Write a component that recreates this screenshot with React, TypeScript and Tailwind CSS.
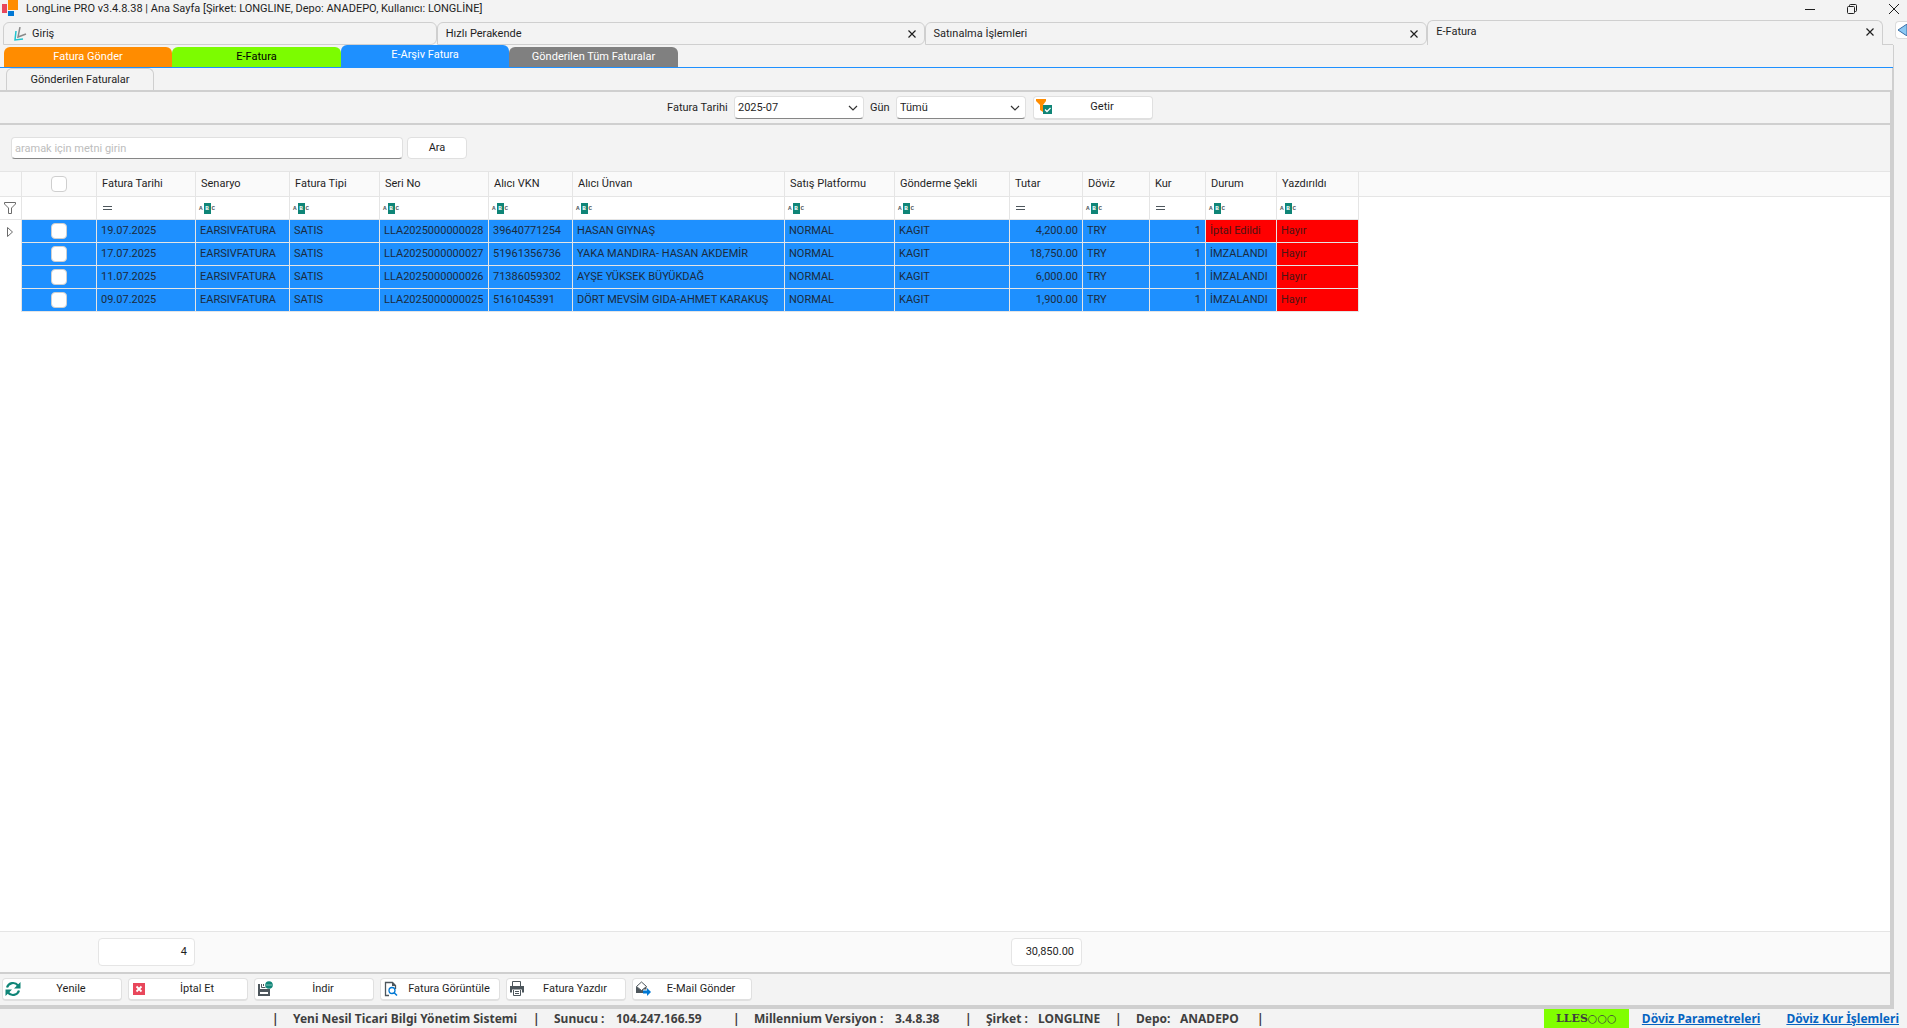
import type { ReactNode } from "react";
import clsx from "clsx";

type Invoice = {
  date: string;
  serial: string;
  taxNo: string;
  title: string;
  amount: string;
  status: string;
  cancelled?: boolean;
};

const invoices: Invoice[] = [
  { date: "19.07.2025", serial: "LLA2025000000028", taxNo: "39640771254", title: "HASAN GIYNAŞ", amount: "4,200.00", status: "İptal Edildi", cancelled: true },
  { date: "17.07.2025", serial: "LLA2025000000027", taxNo: "51961356736", title: "YAKA MANDIRA- HASAN AKDEMİR", amount: "18,750.00", status: "İMZALANDI" },
  { date: "11.07.2025", serial: "LLA2025000000026", taxNo: "71386059302", title: "AYŞE YÜKSEK BÜYÜKDAĞ", amount: "6,000.00", status: "İMZALANDI" },
  { date: "09.07.2025", serial: "LLA2025000000025", taxNo: "5161045391", title: "DÖRT MEVSİM GIDA-AHMET KARAKUŞ", amount: "1,900.00", status: "İMZALANDI" },
];

const columns = [
  { label: "Fatura Tarihi", width: "w-[99px]", filter: "equals" },
  { label: "Senaryo", width: "w-[94px]", filter: "text" },
  { label: "Fatura Tipi", width: "w-[90px]", filter: "text" },
  { label: "Seri No", width: "w-[109px]", filter: "text" },
  { label: "Alıcı VKN", width: "w-[84px]", filter: "text" },
  { label: "Alıcı Ünvan", width: "w-[212px]", filter: "text" },
  { label: "Satış Platformu", width: "w-[110px]", filter: "text" },
  { label: "Gönderme Şekli", width: "w-[115px]", filter: "text" },
  { label: "Tutar", width: "w-[73px]", filter: "equals" },
  { label: "Döviz", width: "w-[67px]", filter: "text" },
  { label: "Kur", width: "w-[56px]", filter: "equals" },
  { label: "Durum", width: "w-[71px]", filter: "text" },
  { label: "Yazdırıldı", width: "w-[82px]", filter: "text" },
];

const cellBorder = "border-r border-b border-[#e5e5e5]";

export default function App() {
  return (
    <div className="flex h-screen flex-col overflow-hidden bg-[#f3f3f3] font-[Roboto,sans-serif] text-[11px] leading-4 whitespace-nowrap text-[#1f1f1f]">
      <TitleBar />
      <DocumentTabs />
      <main className="mr-[13px] flex min-h-0 flex-1 flex-col border-r border-[#cfcfcf]">
        <InvoiceTabs />
        <div className="flex h-[22px] shrink-0 items-end border-r border-[#cfcfcf] pl-1.5">
          <button className="h-[22px] w-[148px] rounded-t-md border border-b-0 border-[#cfcfcf] text-center">
            Gönderilen Faturalar
          </button>
        </div>
        <div className="flex min-h-0 flex-1 flex-col border-r-3 border-[#cfcfcf]">
          <FilterBar />
          <SearchBar />
          <div className="min-h-0 flex-1 bg-white">
            <InvoiceTable />
          </div>
          <div className="grid h-[41px] shrink-0 grid-cols-[98px_97px_816px_71px] items-center border-t border-[#e5e5e5] bg-[#fafafa]">
            <output className="col-start-2 h-7 rounded border border-[#e5e5e5] bg-white pr-[7px] text-right leading-[26px]">4</output>
            <output className="col-start-4 h-7 rounded border border-[#e5e5e5] bg-white pr-[7px] text-right leading-[26px]">30,850.00</output>
          </div>
          <Toolbar />
        </div>
      </main>
      <StatusBar />
    </div>
  );
}

function TitleBar() {
  return (
    <header className="flex h-5 shrink-0 items-center">
      <svg className="ml-0.5 h-5 w-4" viewBox="0 0 16 20" shapeRendering="crispEdges">
        <rect x="6" y="0" width="10" height="10" fill="#ff8c00" />
        <rect x="0" y="4" width="5" height="9" fill="#e8475b" />
        <rect x="6" y="11" width="6" height="5" fill="#0078d4" />
      </svg>
      <h1 className="ml-2 pb-0.5">LongLine PRO v3.4.8.38 | Ana Sayfa [Şirket: LONGLINE, Depo: ANADEPO, Kullanıcı: LONGLİNE]</h1>
      <div className="ml-auto flex pb-0.5">
        <button aria-label="Simge durumuna küçült" className="flex w-[42px] justify-center">
          <svg className="size-3" viewBox="0 0 12 12" stroke="#1f1f1f"><path d="M1 6.5h10" /></svg>
        </button>
        <button aria-label="Önceki boyut" className="flex w-[42px] justify-center">
          <svg className="size-3" viewBox="0 0 12 12" fill="none" stroke="#1f1f1f">
            <rect x="1.5" y="3.5" width="7" height="7" rx="1" />
            <path d="M3.5 3.5v-1a1 1 0 0 1 1-1h5a1 1 0 0 1 1 1v5a1 1 0 0 1-1 1h-1" />
          </svg>
        </button>
        <button aria-label="Kapat" className="flex w-[34px] justify-center pl-2">
          <svg className="size-3" viewBox="0 0 12 12" stroke="#1f1f1f"><path d="M1 1l10 10M11 1L1 11" /></svg>
        </button>
      </div>
    </header>
  );
}

function DocumentTabs() {
  return (
    <nav className="flex h-[25px] shrink-0 items-end pl-[3px]">
      <button className="flex h-[23px] min-w-0 flex-[422] items-center rounded-t-md rounded-br-md border border-[#cfcfcf] pl-2.5">
        <svg className="mr-1 size-[14px]" viewBox="0 0 14 14" fill="none">
          <path d="M2 4L1 13l8-1" stroke="#20c4cf" strokeWidth="1.5" />
          <path d="M6 0L4 10l8-3" stroke="#8a8a8a" strokeWidth="1.5" />
        </svg>
        Giriş
      </button>
      <DocumentTab label="Hızlı Perakende" className="h-[23px] flex-[470] rounded-br-md border-b" />
      <DocumentTab label="Satınalma İşlemleri" className="h-[23px] flex-[485] rounded-br-md border-b" />
      <DocumentTab label="E-Fatura" className="h-[25px] flex-[438] pb-0.5" />
      <div className="w-2.5 shrink-0 self-stretch border-b border-[#cfcfcf]" />
      <div className="flex w-[14px] shrink-0 justify-end self-start pt-px">
        <button aria-label="Geri" className="flex h-[18px] w-3 items-center justify-end rounded-l border border-r-0 border-[#dcdcdc] bg-white">
          <svg className="h-3 w-[9px]" viewBox="0 0 9 12"><path d="M9 0L0 6l9 6z" fill="#8cc8f4" stroke="#3a6ea5" /></svg>
        </button>
      </div>
    </nav>
  );
}

function DocumentTab(props: { label: string; className: string }) {
  return (
    <div className={clsx("flex min-w-0 items-center justify-between rounded-t-md border-x border-t border-[#cfcfcf] pr-2 pl-2", props.className)}>
      <button>{props.label}</button>
      <button aria-label={`${props.label} sekmesini kapat`}>
        <svg className="size-2" viewBox="0 0 8 8" stroke="#1f1f1f" strokeWidth="1.2"><path d="M.5.5l7 7M7.5.5l-7 7" /></svg>
      </button>
    </div>
  );
}

function InvoiceTabs() {
  return (
    <nav className="flex h-[23px] shrink-0 items-end border-b border-[#1e90ff] pl-1">
      <button className="h-5 w-[168px] rounded-t-md bg-[#ff8c00] text-white">Fatura Gönder</button>
      <button className="h-5 w-[169px] rounded-t-md bg-[#7cfc00] text-black">E-Fatura</button>
      <button className="h-[22px] w-[168px] rounded-t-md bg-[#1e90ff] pb-0.5 text-white">E-Arşiv Fatura</button>
      <button className="h-5 w-[169px] rounded-t-md bg-[#808080] text-white">Gönderilen Tüm Faturalar</button>
    </nav>
  );
}

function FilterBar() {
  return (
    <div className="flex h-[35px] shrink-0 items-center border-y-2 border-[#cfcfcf] pl-[667px]">
      <label htmlFor="period" className="w-[67px]">Fatura Tarihi</label>
      <Dropdown id="period" value="2025-07" />
      <label htmlFor="day" className="ml-1.5 w-[26px]">Gün</label>
      <Dropdown id="day" value="Tümü" />
      <button className="ml-[7px] flex h-6 w-[120px] items-center rounded border border-b-2 border-[#e0e0e0] bg-white">
        <svg className="ml-0.5 size-4" viewBox="0 0 16 16">
          <path d="M0 0h10v2L7 6v7l-3-2V6L0 2z" fill="#ff8c00" />
          <rect x="7" y="6" width="9" height="9" fill="#0f8577" />
          <path d="M9 10.5l2 2 3.5-3.5" fill="none" stroke="#fff" strokeWidth="1.3" />
        </svg>
        <span className="flex-1">Getir</span>
      </button>
    </div>
  );
}

function Dropdown(props: { id: string; value: string }) {
  return (
    <div className="grid w-[130px] items-center">
      <select id={props.id} defaultValue={props.value} className="col-start-1 row-start-1 h-[23px] w-full appearance-none rounded border border-[#e0e0e0] border-b-[#868686] bg-white pl-[3px]">
        <option>{props.value}</option>
      </select>
      <svg className="pointer-events-none col-start-1 row-start-1 mr-1.5 h-2 w-2.5 justify-self-end" viewBox="0 0 10 8" fill="none" stroke="#333" strokeWidth="1.2">
        <path d="M1 2l4 4 4-4" />
      </svg>
    </div>
  );
}

function SearchBar() {
  return (
    <div className="flex h-[46px] shrink-0 items-center gap-1 pl-[11px]">
      <input
        type="text"
        aria-label="Arama metni"
        placeholder="aramak için metni girin"
        className="h-[22px] w-[392px] rounded border border-[#e0e0e0] border-b-[#868686] bg-white px-[3px] placeholder:text-[#bdbdbd]"
      />
      <button className="h-[22px] w-[60px] rounded border border-[#e0e0e0] bg-white">Ara</button>
    </div>
  );
}

function InvoiceTable() {
  return (
    <table className="w-full table-fixed border-separate border-spacing-0 border-t border-[#e5e5e5] text-left">
      <thead>
        <tr className="h-[25px] bg-[#fafafa]">
          <th className={clsx("w-[22px]", cellBorder)} />
          <th className={clsx("w-[75px] p-0", cellBorder)}>
            <RowCheckbox label="Tümünü seç" />
          </th>
          {columns.map((column) => (
            <th key={column.label} className={clsx("p-0 pl-[5px] font-normal", column.width, cellBorder)}>
              {column.label}
            </th>
          ))}
          <th className="border-b border-[#e5e5e5]" />
        </tr>
        <tr className="h-[23px]">
          <td className={clsx("p-0", cellBorder)}>
            <svg className="ml-1 h-3 w-3" viewBox="0 0 12 12" fill="none" stroke="#6b6b6b">
              <path d="M.5.5h11v1.5l-4 4v5.500h-3V6l-4-4z" />
            </svg>
          </td>
          <td className={cellBorder} />
          {columns.map((column) => (
            <td key={column.label} className={clsx("p-0", cellBorder)}>
              {column.filter === "equals" ? (
                <div className="ml-1.5 h-1 w-[9px] border-y border-[#4d565c]" />
              ) : (
                <TextFilterMark />
              )}
            </td>
          ))}
          <td />
        </tr>
      </thead>
      <tbody>
        {invoices.map((invoice, index) => (
          <tr key={invoice.serial} className="h-[23px]">
            <td className="border-r border-[#e5e5e5] p-0">
              {index === 0 ? (
                <svg className="ml-[7px] h-2.5 w-[7px]" viewBox="0 0 7 10" fill="none" stroke="#6b6b6b">
                  <path d="M.5.5l5 4.500-5 4.500z" />
                </svg>
              ) : null}
            </td>
            <Cell>
              <RowCheckbox label={`${invoice.serial} seç`} />
            </Cell>
            <Cell>{invoice.date}</Cell>
            <Cell>EARSIVFATURA</Cell>
            <Cell>SATIS</Cell>
            <Cell>{invoice.serial}</Cell>
            <Cell>{invoice.taxNo}</Cell>
            <Cell>{invoice.title}</Cell>
            <Cell>NORMAL</Cell>
            <Cell>KAGIT</Cell>
            <Cell align="right">{invoice.amount}</Cell>
            <Cell>TRY</Cell>
            <Cell align="right">1</Cell>
            <Cell alert={invoice.cancelled}>{invoice.status}</Cell>
            <Cell alert>Hayır</Cell>
            <td />
          </tr>
        ))}
      </tbody>
    </table>
  );
}

function Cell(props: { children: ReactNode; align?: "right"; alert?: boolean }) {
  return (
    <td
      className={clsx(
        "px-1 py-0",
        cellBorder,
        props.align === "right" && "text-right",
        props.alert ? "bg-[#ff0000] text-[#4d1414]" : "bg-[#1e90ff] text-[#1b2b3d]",
      )}
    >
      {props.children}
    </td>
  );
}

function RowCheckbox(props: { label: string }) {
  return (
    <input
      type="checkbox"
      aria-label={props.label}
      className="mx-auto block size-4 appearance-none rounded border border-[#cfcfcf] bg-white"
    />
  );
}

function TextFilterMark() {
  return (
    <div className="ml-[3px] flex h-[11px] items-center gap-px font-['Liberation_Mono',monospace] text-[6px] leading-[11px] font-bold text-[#4d565c]">
      <span>A</span>
      <span className="w-[7px] bg-[#0f8577] text-center text-white">B</span>
      <span>C</span>
    </div>
  );
}

function Toolbar() {
  return (
    <div className="flex h-[37px] shrink-0 items-center gap-1.5 border-t-2 border-b-4 border-[#cfcfcf] pl-0.5">
      <ToolButton label="Yenile">
        <g fill="none" stroke="#0f8577" strokeWidth="2.2">
          <path d="M2 6.5C3.5 1.5 10 .5 13 4.500M14 9.500C12.500 14.500 6 15.500 3 11.500" />
        </g>
        <path d="M15.500 1v6.500H9zM.5 15V8.500H7z" fill="#0f8577" />
      </ToolButton>
      <ToolButton label="İptal Et">
        <rect x="2" y="2" width="12" height="12" fill="#e8475b" />
        <path d="M5.500 5.500l5 5M10.500 5.500l-5 5" stroke="#fff" strokeWidth="1.800" />
      </ToolButton>
      <ToolButton label="İndir">
        <path d="M1 3h2v5h8V8h2v7H1zM3 11v2h8v-2z" fill="#4d565c" fillRule="evenodd" />
        <path d="M4.500 3v3.500h4M6.500 3v2" fill="none" stroke="#4d565c" />
        <circle cx="12" cy="4" r="3.800" fill="#0f8577" />
        <path d="M9.500 4h5" stroke="#fff" strokeDasharray="1 1" />
      </ToolButton>
      <ToolButton label="Fatura Görüntüle">
        <path d="M6 14.500H2.500v-13h7l3 3V8" fill="none" stroke="#4d565c" strokeWidth="1.300" />
        <path d="M9 1v4h4" fill="#4d565c" />
        <circle cx="9" cy="9.500" r="3" fill="#fff" stroke="#0078d4" strokeWidth="1.300" />
        <path d="M11 11.500l3 3" stroke="#0078d4" strokeWidth="1.500" />
      </ToolButton>
      <ToolButton label="Fatura Yazdır">
        <path d="M3.500 5V.500h8V5" fill="none" stroke="#4d565c" />
        <path d="M1 5h14v6.500h-2V8.500H3v3H1z" fill="#4d565c" />
        <path d="M4.500 9v5.500h7V9M6 10.500h4M6 12.500h4" fill="none" stroke="#4d565c" />
      </ToolButton>
      <ToolButton label="E-Mail Gönder">
        <path d="M1.500 5.500l5-4.500 5 4.500-5 4z" fill="none" stroke="#4d565c" />
        <path d="M1 5.500l5.500 4 5-4v3H8V12H1z" fill="#4d565c" />
        <path d="M8 9.500h4V7l4 4-4 4v-2.500H8z" fill="#0078d4" />
      </ToolButton>
    </div>
  );
}

function ToolButton(props: { label: string; children: ReactNode }) {
  return (
    <button className="flex h-[23px] w-[120px] items-center rounded border border-b-2 border-[#e0e0e0] bg-white">
      <svg className="ml-0.5 size-4" viewBox="0 0 16 16">{props.children}</svg>
      <span className="flex-1">{props.label}</span>
    </button>
  );
}

function StatusBar() {
  return (
    <footer className="flex h-[19px] shrink-0 items-center pl-[272px] font-['Noto_Sans',sans-serif] text-xs font-bold text-[#3f3f3f]">
      <span className="w-[21px]">|</span>
      <span className="w-[240px]">Yeni Nesil Ticari Bilgi Yönetim Sistemi</span>
      <span className="w-[21px]">|</span>
      <span className="w-[62px]">Sunucu :</span>
      <span className="w-[117px]">104.247.166.59</span>
      <span className="w-[21px]">|</span>
      <span className="w-[141px]">Millennium Versiyon :</span>
      <span className="w-[70px]">3.4.8.38</span>
      <span className="w-[21px]">|</span>
      <span className="w-[52px]">Şirket :</span>
      <span className="w-[77px]">LONGLINE</span>
      <span className="w-[21px]">|</span>
      <span className="w-11">Depo:</span>
      <span className="w-[77px]">ANADEPO</span>
      <span>|</span>
      <div className="ml-auto flex items-center pr-2">
        <span className="mr-[13px] h-[19px] w-[85px] bg-[#80ff00] text-center font-['DejaVu_Serif',serif] text-[11px] leading-[19px]">
          LLES<span className="font-normal">○○○</span>
        </span>
        <a href="#parametreler" className="mr-[26px] text-[#0563c1] underline">Döviz Parametreleri</a>
        <a href="#kur" className="text-[#0563c1] underline">Döviz Kur İşlemleri</a>
      </div>
    </footer>
  );
}
